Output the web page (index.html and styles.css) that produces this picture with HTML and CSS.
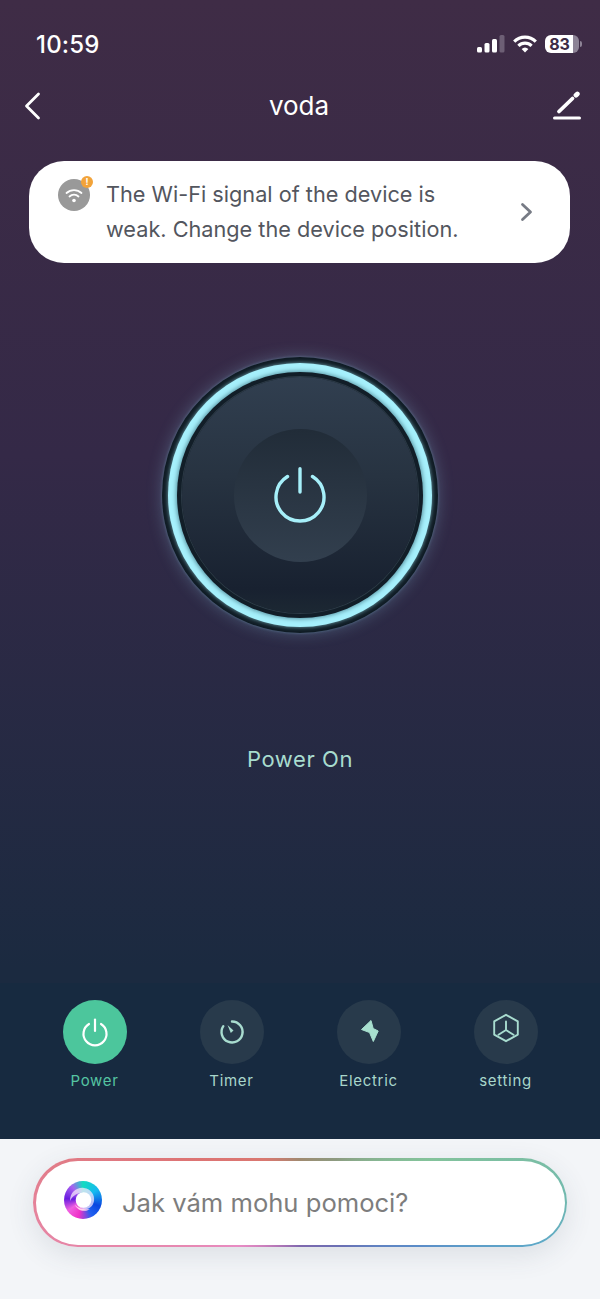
FILE: index.html
```html
<!DOCTYPE html>
<html lang="en">
<head>
<meta charset="utf-8">
<title>voda</title>
<link rel="stylesheet" href="styles.css">
</head>
<body>
<div class="app">
  <main class="device">
    <div class="status">
      <span class="time">10:59</span>
      <div class="status-icons">
        <svg class="signal" width="28" height="18" viewBox="0 0 28 18"><rect x="0" y="12" width="5" height="5.500" rx="1.500" fill="#fff"/><rect x="7.500" y="8" width="5" height="9.500" rx="1.500" fill="#fff"/><rect x="15" y="4" width="5" height="13.500" rx="1.500" fill="#fff"/><rect x="22.500" y="0" width="5" height="17.500" rx="1.500" fill="#6d5f75"/></svg>
        <svg class="wifi" width="24" height="18" viewBox="0 0 24 18" fill="none" stroke="#fff" stroke-width="3.200"><path d="M1.200 6.600a15.500 15.500 0 0 1 21.600 0"/><path d="M5.400 10.800a9.500 9.500 0 0 1 13.200 0"/><path d="M8.600 14a5 5 0 0 1 6.800 0L12 17.600z" fill="#fff" stroke="none"/></svg>
        <div class="battery"><div class="battery-body"><span class="battery-text">83</span></div><span class="battery-cap"></span></div>
      </div>
    </div>
    <header class="nav">
      <svg width="20" height="28" viewBox="0 0 20 28" fill="none" stroke="#fff" stroke-width="2.800" stroke-linecap="round" stroke-linejoin="round"><path d="M15.500 2 3.500 14l12 12"/></svg>
      <h1 class="title">voda</h1>
      <svg width="30" height="30" viewBox="0 0 30 30" fill="none" stroke-linecap="round"><path d="M2.500 27h25" stroke="#fff" stroke-width="3"/><path d="M7 20.500 20.500 7.500" stroke="#fff" stroke-width="3.800"/><path d="M24 4.200l1.300-1.200" stroke="#fff" stroke-width="4.800"/></svg>
    </header>
    <section class="notice">
      <div class="notice-icon">
        <svg width="32" height="32" viewBox="0 0 32 32" fill="none" stroke="#fff" stroke-linecap="round"><circle cx="16" cy="16" r="16" fill="#999" stroke="none"/><path d="M8.500 14a11 11 0 0 1 15 0" stroke-width="1.800"/><path d="M11.500 17.500a6.500 6.500 0 0 1 9 0" stroke-width="1.800"/><circle cx="16" cy="21.500" r="1.800" fill="#fff" stroke="none"/></svg>
        <span class="notice-badge">!</span>
      </div>
      <p class="notice-text">The Wi-Fi signal of the device is weak. Change the device position.</p>
      <svg class="notice-arrow" width="14" height="20" viewBox="0 0 14 20" fill="none" stroke="#777b85" stroke-width="2.800" stroke-linecap="round" stroke-linejoin="round"><path d="M2.500 2.500 10.500 10l-8 7.500"/></svg>
    </section>
    <div class="knob-wrap">
      <div class="knob">
        <div class="knob-ring">
          <div class="knob-gap">
            <div class="knob-disc">
              <div class="knob-core">
                <svg width="54" height="56" viewBox="0 0 54 56" fill="none" stroke="#a6eff9" stroke-width="3.400" stroke-linecap="round"><path d="M14.500 9.500a24 24 0 1 0 25 0"/><path d="M27 1.700V25"/></svg>
              </div>
            </div>
          </div>
        </div>
      </div>
    </div>
    <p class="state">Power On</p>
    <nav class="tabs">
      <div class="tab tab-active">
        <span class="tab-icon"><svg width="30" height="30" viewBox="0 0 30 30" fill="none" stroke="#fff" stroke-width="2.200" stroke-linecap="round"><path d="M9 7a11.500 11.500 0 1 0 12 0"/><path d="M15 2.500V14"/></svg></span>
        <span class="tab-label">Power</span>
      </div>
      <div class="tab">
        <span class="tab-icon"><svg width="30" height="30" viewBox="0 0 30 30" fill="none" stroke="#a8dccf" stroke-width="2.400" stroke-linecap="round"><path d="M15 4.500A10.500 10.500 0 1 1 6.300 9.200"/><path d="M10.500 8 16.500 13.500 13.800 16z" fill="#a8dccf" stroke="none"/></svg></span>
        <span class="tab-label">Timer</span>
      </div>
      <div class="tab">
        <span class="tab-icon"><svg width="30" height="30" viewBox="0 0 30 30"><path d="M17 3.500 7.500 12.500 15.500 15.500 19.300 24.500 24.200 14 19.200 11.500z" fill="#a8e0cf" stroke="#a8e0cf" stroke-width="1" stroke-linejoin="round"/></svg></span>
        <span class="tab-label">Electric</span>
      </div>
      <div class="tab">
        <span class="tab-icon"><svg class="icon-setting" width="30" height="30" viewBox="0 0 30 30" fill="none" stroke="#a8dccf" stroke-width="1.900" stroke-linejoin="round" stroke-linecap="round"><path d="M15 1.800 26.800 8.400v13.200L15 28.200 3.200 21.600V8.400z"/><path d="M15 8.500V17M15 17l-7.500 4.800M15 17l7.500 4.800"/></svg></span>
        <span class="tab-label">setting</span>
      </div>
    </nav>
  </main>
  <footer class="assistant">
    <div class="pill">
      <div class="pill-inner">
        <div class="logo">
          <svg width="38" height="38" viewBox="0 0 38 38">
            <path d="M6 20C6 11 13 6 20 7 27 8 31 14 30 20 29 26 24 29 19 28 14 27 12 23 13 19 15 25 23 25 25 19 26 14 21 11 16 12 11 13 8 16 6 20z" fill="#f6e6fb" opacity=".75"/>
            <circle cx="19.500" cy="19" r="7.800" fill="#fff"/>
            <path d="M11 24C13 29 20 32 26 28 21 29 15 28 11 24z" fill="#ffd0ee"/>
          </svg>
        </div>
        <span class="prompt">Jak vám mohu pomoci?</span>
      </div>
    </div>
  </footer>
</div>
</body>
</html>
```
FILE: styles.css
```css
* { box-sizing: border-box; }
html, body { margin: 0; padding: 0; }
body { width: 600px; height: 1299px; overflow: hidden; font-family: Inter, Roboto, "Liberation Sans", sans-serif; background: #f3f5f8; }
.app { display: flex; flex-direction: column; height: 1299px; }

.device { display: flex; flex-direction: column; height: 1139px; background: linear-gradient(180deg, #3f2c46 0%, #342947 40%, #1b2a40 85%, #1b2a40 100%); }

.status { display: flex; justify-content: space-between; align-items: center; height: 88px; padding: 0 18px 0 36px; }
.time { color: #fff; font-size: 24px; font-weight: 500; letter-spacing: .2px; }
.status-icons { display: flex; align-items: center; gap: 8px; }
.status-icons svg { display: block; }
.battery { display: flex; align-items: center; gap: 1px; }
.battery-body { width: 34px; height: 18px; border-radius: 6px; background: linear-gradient(90deg, #fff 83%, #8d8396 83%); display: flex; align-items: center; justify-content: center; padding-right: 5px; }
.battery-text { color: #3d2c46; font-size: 16px; font-weight: 700; line-height: 1; }
.battery-cap { width: 2px; height: 6px; border-radius: 0 2px 2px 0; background: #8d8396; }

.nav { display: flex; justify-content: space-between; align-items: center; height: 36px; padding: 0 18px 0 23px; }
.title { margin: 0 0 0 3px; color: #fff; font-size: 26px; font-weight: 400; line-height: 36px; }

.notice { display: flex; align-items: flex-start; margin: 37px 30px 0 29px; height: 102px; padding: 16px 36px 0 29px; background: #fff; border-radius: 35px; }
.notice-icon { position: relative; width: 32px; height: 32px; margin-top: 2px; flex: none; }
.notice-icon svg { display: block; }
.notice-badge { position: absolute; top: -3px; right: -3px; width: 12px; height: 12px; border-radius: 50%; background: #f2a33a; color: #fff; font-size: 9px; font-weight: 700; line-height: 12px; text-align: center; }
.notice-text { margin: 0 0 0 16px; width: 360px; color: #53565e; font-size: 21.700px; line-height: 35px; }
.notice-arrow { margin: 25px 0 0 auto; flex: none; }

.knob-wrap { display: flex; justify-content: center; margin-top: 94px; }
.knob { width: 276px; height: 276px; border-radius: 50%; display: flex; align-items: center; justify-content: center; background: #101c25; box-shadow: 0 0 16px rgba(150, 215, 240, .28), 0 0 3px rgba(150, 215, 240, .35); }
.knob-ring { width: 264px; height: 264px; border-radius: 50%; display: flex; align-items: center; justify-content: center; background: #a6f0fc; box-shadow: 0 0 4px rgba(160, 235, 250, .7); }
.knob-gap { width: 246px; height: 246px; border-radius: 50%; display: flex; align-items: center; justify-content: center; background: #121e28; box-shadow: 0 0 4px 1px rgba(70, 125, 140, .85); }
.knob-disc { width: 236px; height: 236px; border-radius: 50%; display: flex; align-items: center; justify-content: center; background: linear-gradient(180deg, #313f50 0%, #273341 42%, #182130 90%, #1c2833 100%); box-shadow: 0 0 0 1px #2c3a46; }
.knob-core { width: 133px; height: 133px; border-radius: 50%; display: flex; align-items: center; justify-content: center; background: linear-gradient(180deg, #212c38 0%, #323f4e 100%); }
.knob-core svg { display: block; }

.state { margin: 111px 0 0; text-align: center; color: #a8dccf; font-size: 22px; line-height: 30px; letter-spacing: .6px; }

.tabs { margin-top: auto; height: 156px; padding: 17px 26px 0; display: grid; grid-template-columns: repeat(4, 137px); align-content: start; background: #172a40; }
.tab { display: flex; flex-direction: column; align-items: center; }
.tab-icon { width: 64px; height: 64px; border-radius: 50%; display: flex; align-items: center; justify-content: center; background: #283a4b; }
.tab-label { margin-top: 6.500px; color: #a8d6cb; font-size: 15px; line-height: 20px; letter-spacing: .7px; }
.tab-active .tab-icon { background: #4cc69c; }
.tab-active .tab-label { color: #55c4a2; }
.icon-setting { margin-top: -9px; }

.assistant { flex: 1; padding: 19px 33px 0; background: #f3f5f8; }
.pill { height: 89px; padding: 2.500px; border-radius: 45px; background: conic-gradient(from 0deg at 50% 50%, #a08a70 0deg, #8d9a80 40deg, #84c39b 72deg, #70b8b0 90deg, #5ea8c8 100deg, #5b8cc8 110deg, #6a70b4 135deg, #7f68ae 180deg, #b878b8 210deg, #e88cc4 235deg, #e5839c 268deg, #dd7474 290deg, #d97870 320deg, #a08a70 360deg); box-shadow: 0 8px 28px rgba(60, 70, 90, .12); }
.pill-inner { display: flex; align-items: center; height: 84px; padding: 0 28.500px; border-radius: 42px; background: #fff; }
.logo { flex: none; width: 38px; height: 38px; margin-top: -5px; border-radius: 50%; background: conic-gradient(from 0deg at 50% 50%, #14dcc0 0deg, #15b8f0 55deg, #0a46e0 110deg, #2060f0 150deg, #f030c8 195deg, #f060e0 235deg, #6a1ce0 275deg, #a860f0 320deg, #14dcc0 360deg); }
.logo svg { display: block; }
.prompt { margin-left: 20px; color: #7d7d7d; font-size: 25.600px; }
```
